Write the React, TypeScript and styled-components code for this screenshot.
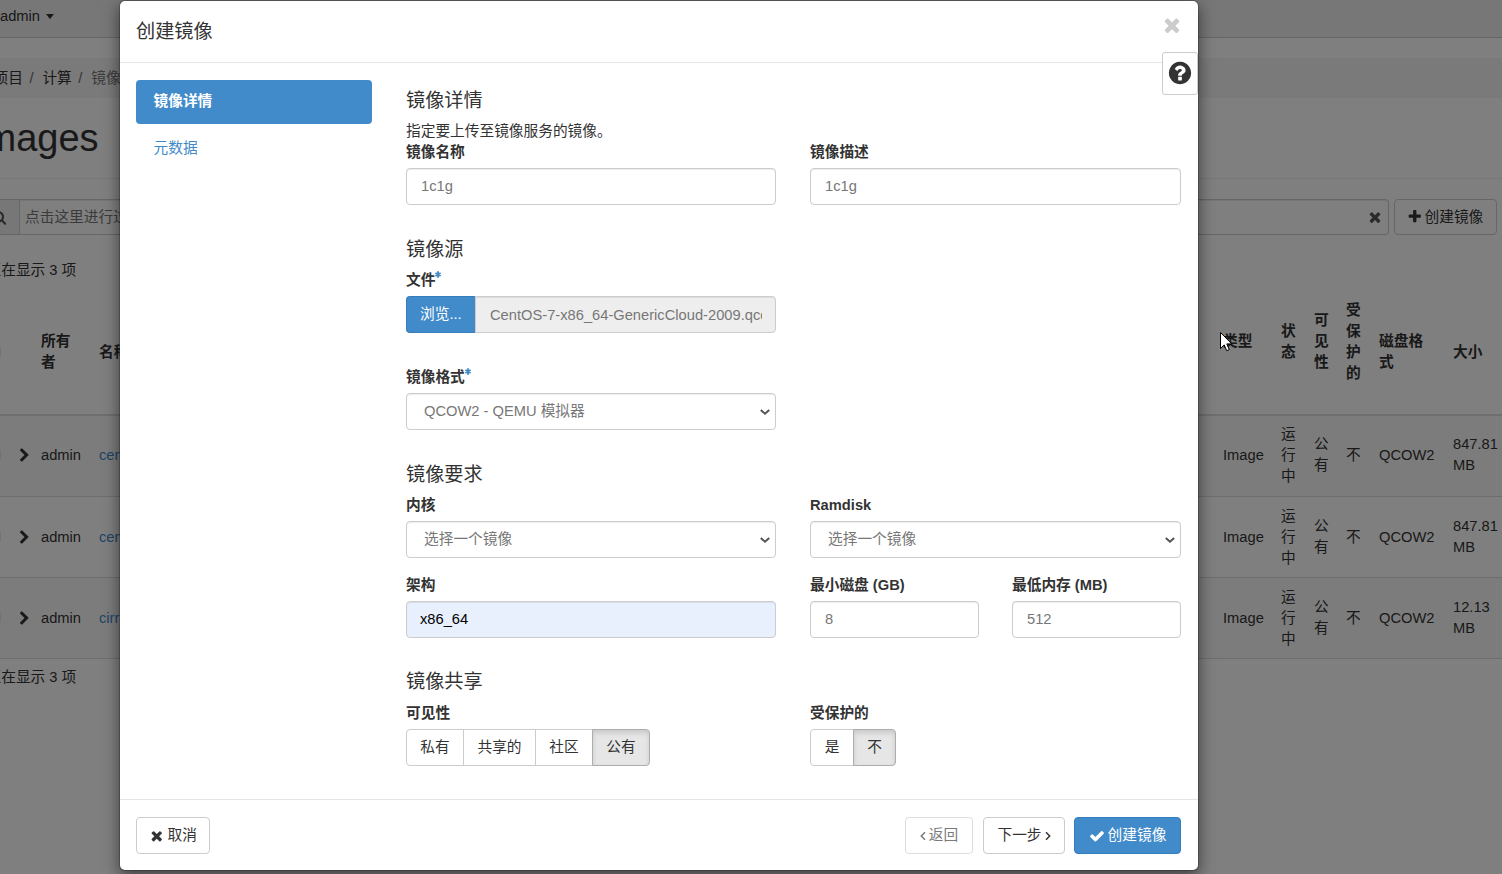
import React from 'react';
import styled, { createGlobalStyle, css } from 'styled-components';

const GlobalStyle = createGlobalStyle`
  *, *::before, *::after { box-sizing: border-box; }
  html, body { margin: 0; padding: 0; }
  body {
    background: #fff;
    color: #333;
    font-family: "Liberation Sans", "Noto Sans CJK SC", sans-serif;
    font-size: 14.7px;
    line-height: 21px;
    overflow: hidden;
  }
  h1, h3, h4, p { margin: 0; font-weight: 400; }
`;

/* ---------- icons ---------- */

const paths = {
  times:
    'M1490 1322q0 40-28 68l-136 136q-28 28-68 28t-68-28l-294-294-294 294q-28 28-68 28t-68-28l-136-136q-28-28-28-68t28-68l294-294-294-294q-28-28-28-68t28-68l136-136q28-28 68-28t68 28l294 294 294-294q28-28 68-28t68 28l136 136q28 28 28 68t-28 68l-294 294 294 294q28 28 28 68z',
  check:
    'M1671 566q0 40-28 68l-724 724-136 136q-28 28-68 28t-68-28l-136-136-362-362q-28-28-28-68t28-68l136-136q28-28 68-28t68 28l294 295 656-657q28-28 68-28t68 28l136 136q28 28 28 68z',
  plus:
    'M1600 736v192q0 40-28 68t-68 28h-416v416q0 40-28 68t-68 28h-192q-40 0-68-28t-28-68v-416h-416q-40 0-68-28t-28-68v-192q0-40 28-68t68-28h416v-416q0-40 28-68t68-28h192q40 0 68 28t28 68v416h416q40 0 68 28t28 68z',
  question:
    'M1024 1376v-192q0-14-9-23t-23-9h-192q-14 0-23 9t-9 23v192q0 14 9 23t23 9h192q14 0 23-9t9-23zm256-672q0-88-55.5-163t-138.5-116-170-41q-243 0-371 213-15 24 8 42l132 100q7 6 19 6 16 0 25-12 53-68 86-92 34-24 86-24 48 0 85.5 26t37.5 59q0 38-20 61t-68 45q-63 28-115.5 86.5t-52.5 125.500v36q0 14 9 23t23 9h192q14 0 23-9t9-23q0-19 21.500-49.500t54.500-49.500q32-18 49-28.500t46-35 44.500-48 28-60.500 12.500-81zm384 192q0 209-103 385.500t-279.500 279.500-385.500 103-385.500-103-279.500-279.500-103-385.500 103-385.500 279.500-279.500 385.500-103 385.500 103 279.500 279.500 103 385.500z',
  chevronRight:
    'M1363 877l-742 742q-19 19-45 19t-45-19l-166-166q-19-19-19-45t19-45l531-531-531-531q-19-19-19-45t19-45l166-166q19-19 45-19t45 19l742 742q19 19 19 45t-19 45z',
  search:
    'M1216 832q0-185-131.500-316.500t-316.500-131.500-316.500 131.500-131.500 316.500 131.500 316.500 316.500 131.500 316.500-131.500 131.500-316.500zm512 832q0 52-38 90t-90 38q-54 0-90-38l-343-342q-179 124-399 124-143 0-273.500-55.500t-225-150-150-225-55.500-273.500 55.500-273.500 150-225 225-150 273.500-55.500 273.500 55.500 225 150 150 225 55.500 273.500q0 220-124 399l343 343q37 37 37 90z',
};

const Svg = styled.svg`
  display: block;
  flex: none;
  overflow: visible;
`;

const Icon = ({ name, size }: { name: keyof typeof paths; size: number }) => (
  <Svg width={size} height={size} viewBox="0 0 1792 1792" fill="currentColor">
    <path d={paths[name]} />
  </Svg>
);

const Angle = ({ dir }: { dir: 'left' | 'right' }) => (
  <Svg width="6" height="10" viewBox="0 0 6 10" fill="none" stroke="currentColor" strokeWidth="1.5">
    <path d={dir === 'left' ? 'M5 1.200 1.300 5 5 8.800' : 'M1 1.200 4.700 5 1 8.800'} />
  </Svg>
);

const SelectArrow = () => (
  <Svg width="10" height="6" viewBox="0 0 10 6" fill="none" stroke="#555" strokeWidth="2">
    <path d="M.8 .9 5 4.700 9.200 .9" />
  </Svg>
);

const StarSvg = styled(Svg)`
  margin: 1px 0 0 0;
`;

const Asterisk = () => (
  <StarSvg width="6" height="7" viewBox="0 0 6 7" stroke="#428bca" strokeWidth="1.8">
    <path d="M3 .3V6.700M.4 1.900 5.600 5.100M5.600 1.900.4 5.100" />
  </StarSvg>
);

/* ---------- page behind the dialog ---------- */

const Page = styled.div`
  position: relative;
  height: 874px;
  overflow: hidden;
`;

const TopBar = styled.div`
  display: flex;
  align-items: center;
  height: 38px;
  padding: 0 0 4px;
  background: #eee;
  border-bottom: 1px solid #ccc;
  gap: 6px;
`;

const Caret = styled.span`
  border: 4.500px solid transparent;
  border-top: 5px solid #333;
  border-bottom: 0;
`;

const Breadcrumb = styled.div`
  display: flex;
  align-items: center;
  height: 40px;
  margin-top: 20px;
  background: #f5f5f5;
  white-space: nowrap;
`;

const Crumb = styled.span<{ $active?: boolean }>`
  color: ${(p) => (p.$active ? '#777' : '#333')};
  &:first-child { margin-left: -6.500px; }
`;

const Slash = styled.span`
  width: 19.500px;
  padding-left: 6.500px;
  color: #666;
`;

const PageTitle = styled.h1`
  height: 81px;
  padding-top: 19px;
  margin-left: -26px;
  border-bottom: 1px solid #eee;
  font-size: 38px;
  line-height: 42px;
`;

const FilterBar = styled.div`
  display: flex;
  height: 36px;
  margin-top: 20px;
`;

const FilterAddon = styled.div`
  display: flex;
  align-items: center;
  width: 20px;
  padding-right: 12.500px;
  justify-content: flex-end;
  background: #eee;
  border: solid #ccc;
  border-width: 1px 1px 1px 0;
  color: #555;
`;

const FilterInput = styled.div`
  display: flex;
  align-items: center;
  justify-content: space-between;
  width: 1369px;
  padding: 0 5px 0 5px;
  border: 1px solid #ccc;
  border-left: 0;
  border-radius: 0 4px 4px 0;
  box-shadow: inset 0 1px 1px rgba(0, 0, 0, 0.075);
  color: #777;
  svg { color: #555; }
`;

const PageButton = styled.div`
  display: flex;
  align-items: center;
  gap: 2px;
  width: 103px;
  margin-left: 5px;
  padding-left: 12px;
  border: 1px solid #ccc;
  border-radius: 4px;
  white-space: nowrap;
`;

const Count = styled.div<{ $top: number }>`
  margin: ${(p) => p.$top}px 0 0 -13.500px;
`;

const Row = styled.div<{ $striped?: boolean }>`
  display: grid;
  grid-template-columns: 17px 24px 58px 1124px 58px 33px 32px 33px 74px 49px;
  align-items: center;
  height: 81px;
  border-bottom: 1px solid #ddd;
  background: ${(p) => (p.$striped ? '#f9f9f9' : 'transparent')};
`;

const HeadRow = styled(Row)`
  height: 135px;
  padding-top: 9px;
  border-bottom-width: 2px;
  font-weight: 700;
  & + ${Row} { padding-bottom: 2px; }
`;

const Cell = styled.div<{ $w?: number; $raise?: boolean; $link?: boolean }>`
  width: ${(p) => (p.$w ? `${p.$w}px` : 'auto')};
  padding-bottom: ${(p) => (p.$raise ? 21 : 0)}px;
  color: ${(p) => (p.$link ? '#428bca' : 'inherit')};
  overflow-wrap: anywhere;
`;

const CheckEdge = styled.div`
  width: 14px;
  height: 14px;
  margin-left: -13px;
  border: 1px solid #d5ebe8;
  border-radius: 4px;
`;

/* ---------- dialog ---------- */

const Backdrop = styled.div`
  position: absolute;
  inset: 0;
  padding-left: 119px;
  background: rgba(0, 0, 0, 0.5);
`;

const Modal = styled.div`
  position: relative;
  display: flex;
  flex-direction: column;
  width: 1080px;
  height: 871px;
  background: #fff;
  background-clip: padding-box;
  border: 1px solid rgba(0, 0, 0, 0.2);
  border-radius: 6px;
  box-shadow: 0 5px 15px rgba(0, 0, 0, 0.5);
`;

const ModalHeader = styled.div`
  display: flex;
  justify-content: space-between;
  height: 62px;
  padding: 20px 16px 0;
  border-bottom: 1px solid #e5e5e5;
`;

const ModalTitle = styled.h4`
  font-size: 19.200px;
  line-height: 22px;
`;

const CloseButton = styled.div`
  margin: -7px -1px 0 0;
  color: #ccc;
`;

const HelpButton = styled.div`
  position: absolute;
  top: 51px;
  right: 0;
  display: flex;
  align-items: center;
  justify-content: center;
  width: 36px;
  height: 43px;
  padding-bottom: 2px;
  background: #fff;
  border: 1px solid #ccc;
  border-radius: 3px;
`;

const ModalBody = styled.div`
  display: flex;
  flex: 1;
  min-height: 0;
  padding: 17px 17px 0 16px;
`;

const Steps = styled.nav`
  width: 236px;
  margin-right: 34px;
`;

const Step = styled.div<{ $active?: boolean }>`
  height: 44px;
  margin-bottom: 3px;
  padding: 11px 17.500px;
  border-radius: 4px;
  color: #428bca;
  ${(p) => p.$active && css`
    background: #428bca;
    color: #fff;
    font-weight: 700;
  `}
`;

const Form = styled.div`
  flex: 1;
  padding-top: 10px;
`;

const Section = styled.section`
  margin-bottom: 34px;
  &:last-child { margin-top: -1px; }
  &:last-child h3 { margin-bottom: 11px; }
`;

const SectionTitle = styled.h3`
  margin-bottom: 10px;
  font-size: 19.200px;
  line-height: 21px;
`;

const Columns = styled.div<{ $top?: number }>`
  display: grid;
  grid-template-columns: 370px 371px;
  column-gap: 34px;
  margin-top: ${(p) => p.$top ?? 0}px;
`;

const HalfColumns = styled.div`
  display: grid;
  grid-template-columns: 1fr 1fr;
  column-gap: 33px;
`;

const Label = styled.div`
  display: flex;
  height: 21px;
  margin-bottom: 5px;
  font-weight: 700;
`;

const Control = styled.div<{ $kind?: 'select' | 'filled' }>`
  display: flex;
  align-items: center;
  justify-content: space-between;
  height: 37px;
  padding: 0 13px 0 14px;
  border: 1px solid #ccc;
  border-radius: 4px;
  box-shadow: inset 0 1px 1px rgba(0, 0, 0, 0.075);
  color: #777;
  ${(p) => p.$kind === 'select' && css`
    padding: 0 5px 0 17px;
  `}
  ${(p) => p.$kind === 'filled' && css`
    padding-left: 13px;
    background: #e8f0fe;
    color: #000;
  `}
`;

const FilePicker = styled.div`
  display: flex;
  height: 37px;
`;

const Browse = styled.div`
  display: flex;
  align-items: center;
  width: 69px;
  padding-left: 13px;
  background: #428bca;
  border: 1px solid #357ebd;
  border-right: 0;
  border-radius: 4px 0 0 4px;
  color: #fff;
`;

const FileName = styled.div`
  flex: 1;
  min-width: 0;
  padding: 8px 13px 0 14px;
  background: #eee;
  border: 1px solid #ccc;
  border-radius: 0 4px 4px 0;
  box-shadow: inset 0 1px 1px rgba(0, 0, 0, 0.075);
  color: #777;
  span {
    display: block;
    overflow: hidden;
    white-space: nowrap;
  }
`;

const Toggle = styled.div`
  display: flex;
`;

const ToggleOption = styled.div<{ $w: number; $on?: boolean }>`
  display: flex;
  align-items: center;
  justify-content: center;
  width: ${(p) => p.$w}px;
  height: 37px;
  border: 1px solid #ccc;
  white-space: nowrap;
  & + & { margin-left: -1px; }
  &:first-child { border-radius: 4px 0 0 4px; }
  &:last-child { border-radius: 0 4px 4px 0; }
  ${(p) => p.$on && css`
    background: #e6e6e6;
    border-color: #adadad;
    box-shadow: inset 0 3px 5px rgba(0, 0, 0, 0.125);
  `}
`;

const ModalFooter = styled.div`
  display: flex;
  flex: none;
  height: 71px;
  padding: 17px 17px 0 16px;
  border-top: 1px solid #e5e5e5;
`;

const Button = styled.div<{ $w: number; $ml?: string; $primary?: boolean; $disabled?: boolean }>`
  display: flex;
  align-items: center;
  justify-content: center;
  gap: 3px;
  width: ${(p) => p.$w}px;
  height: 37px;
  margin-left: ${(p) => p.$ml ?? 0};
  border: 1px solid ${(p) => (p.$primary ? '#357ebd' : '#ccc')};
  border-radius: 4px;
  background: ${(p) => (p.$primary ? '#428bca' : '#fff')};
  color: ${(p) => (p.$primary ? '#fff' : '#333')};
  opacity: ${(p) => (p.$disabled ? 0.65 : 1)};
  white-space: nowrap;
`;

const Pointer = styled.svg`
  position: absolute;
  left: 1219px;
  top: 331px;
`;

type ImageRow = { name: string; size: string };

const images: ImageRow[] = [
  { name: 'centos', size: '847.81 MB' },
  { name: 'centos', size: '847.81 MB' },
  { name: 'cirros', size: '12.13 MB' },
];

const Field = ({ label, required, children }: { label: string; required?: boolean; children: React.ReactNode }) => (
  <div>
    <Label>
      {label}
      {required && <Asterisk />}
    </Label>
    {children}
  </div>
);

const Select = ({ value }: { value: string }) => (
  <Control $kind="select">
    {value}
    <SelectArrow />
  </Control>
);

export default function App() {
  return (
    <>
      <GlobalStyle />
      <Page>
        <TopBar>
          admin
          <Caret />
        </TopBar>
        <Breadcrumb>
          <Crumb>项目</Crumb>
          <Slash>/</Slash>
          <Crumb>计算</Crumb>
          <Slash>/</Slash>
          <Crumb $active>镜像</Crumb>
        </Breadcrumb>
        <PageTitle>Images</PageTitle>
        <FilterBar>
          <FilterAddon>
            <Icon name="search" size={14.7} />
          </FilterAddon>
          <FilterInput>
            点击这里进行过滤
            <Icon name="times" size={16} />
          </FilterInput>
          <PageButton>
            <Icon name="plus" size={15.5} />
            创建镜像
          </PageButton>
        </FilterBar>
        <Count $top={25}>正在显示 3 项</Count>
        <HeadRow>
          <CheckEdge />
          <Cell />
          <Cell $w={34}>所有者</Cell>
          <Cell>名称</Cell>
          <Cell $raise>类型</Cell>
          <Cell $w={16} $raise>状态</Cell>
          <Cell $w={16} $raise>可见性</Cell>
          <Cell $w={16} $raise>受保护的</Cell>
          <Cell $w={48}>磁盘格式</Cell>
          <Cell>大小</Cell>
        </HeadRow>
        {images.map((image, i) => (
          <Row key={i} $striped={i % 2 === 0}>
            <CheckEdge />
            <Icon name="chevronRight" size={15} />
            <Cell>admin</Cell>
            <Cell $link>{image.name}</Cell>
            <Cell>Image</Cell>
            <Cell $w={16}>运行中</Cell>
            <Cell $w={16}>公有</Cell>
            <Cell>不</Cell>
            <Cell>QCOW2</Cell>
            <Cell>{image.size}</Cell>
          </Row>
        ))}
        <Count $top={8}>正在显示 3 项</Count>

        <Backdrop>
          <Modal>
            <ModalHeader>
              <ModalTitle>创建镜像</ModalTitle>
              <CloseButton>
                <Icon name="times" size={22} />
              </CloseButton>
            </ModalHeader>
            <HelpButton>
              <Icon name="question" size={26} />
            </HelpButton>
            <ModalBody>
              <Steps>
                <Step $active>镜像详情</Step>
                <Step>元数据</Step>
              </Steps>
              <Form>
                <Section>
                  <SectionTitle>镜像详情</SectionTitle>
                  <p>指定要上传至镜像服务的镜像。</p>
                  <Columns>
                    <Field label="镜像名称"><Control>1c1g</Control></Field>
                    <Field label="镜像描述"><Control>1c1g</Control></Field>
                  </Columns>
                </Section>
                <Section>
                  <SectionTitle>镜像源</SectionTitle>
                  <Columns>
                    <Field label="文件" required>
                      <FilePicker>
                        <Browse>浏览...</Browse>
                        <FileName><span>CentOS-7-x86_64-GenericCloud-2009.qcow2</span></FileName>
                      </FilePicker>
                    </Field>
                  </Columns>
                  <Columns $top={34}>
                    <Field label="镜像格式" required><Select value="QCOW2 - QEMU 模拟器" /></Field>
                  </Columns>
                </Section>
                <Section>
                  <SectionTitle>镜像要求</SectionTitle>
                  <Columns>
                    <Field label="内核"><Select value="选择一个镜像" /></Field>
                    <Field label="Ramdisk"><Select value="选择一个镜像" /></Field>
                  </Columns>
                  <Columns $top={17}>
                    <Field label="架构"><Control $kind="filled">x86_64</Control></Field>
                    <HalfColumns>
                      <Field label="最小磁盘 (GB)"><Control>8</Control></Field>
                      <Field label="最低内存 (MB)"><Control>512</Control></Field>
                    </HalfColumns>
                  </Columns>
                </Section>
                <Section>
                  <SectionTitle>镜像共享</SectionTitle>
                  <Columns>
                    <Field label="可见性">
                      <Toggle>
                        <ToggleOption $w={58}>私有</ToggleOption>
                        <ToggleOption $w={73}>共享的</ToggleOption>
                        <ToggleOption $w={58}>社区</ToggleOption>
                        <ToggleOption $w={58} $on>公有</ToggleOption>
                      </Toggle>
                    </Field>
                    <Field label="受保护的">
                      <Toggle>
                        <ToggleOption $w={44}>是</ToggleOption>
                        <ToggleOption $w={43} $on>不</ToggleOption>
                      </Toggle>
                    </Field>
                  </Columns>
                </Section>
              </Form>
            </ModalBody>
            <ModalFooter>
              <Button $w={74}>
                <Icon name="times" size={15.5} />
                取消
              </Button>
              <Button $w={68} $ml="auto" $disabled>
                <Angle dir="left" />
                返回
              </Button>
              <Button $w={82} $ml="10px">
                下一步
                <Angle dir="right" />
              </Button>
              <Button $w={107} $ml="9px" $primary>
                <Icon name="check" size={16} />
                创建镜像
              </Button>
            </ModalFooter>
          </Modal>
        </Backdrop>
        <Pointer width="14" height="22" viewBox="0 0 14 22" fill="#fff" stroke="#000" strokeWidth="1">
          <path d="M1.500 1.500v16l3.700-3.600 2.500 5.800 2.600-1.100-2.500-5.700h5z" />
        </Pointer>
      </Page>
    </>
  );
}
